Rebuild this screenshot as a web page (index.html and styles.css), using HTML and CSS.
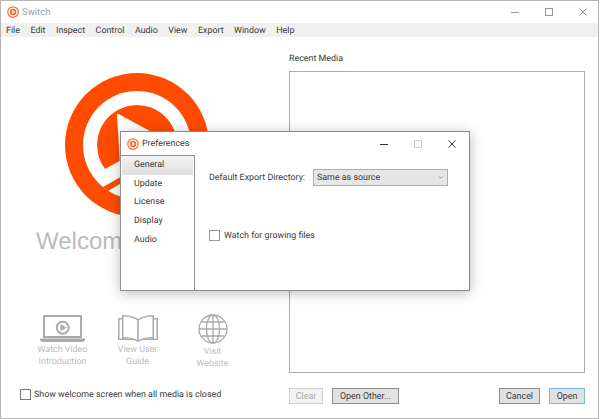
FILE: index.html
```html
<!DOCTYPE html>
<html lang="en">
<head>
<meta charset="utf-8">
<title>Switch</title>
<link rel="stylesheet" href="styles.css">
</head>
<body>
<div class="window">
  <header class="titlebar">
    <svg class="app-icon" viewBox="0 0 24 24"><circle cx="12" cy="12" r="10.500" fill="none" stroke="#ff6a2a" stroke-width="2.500"/><circle cx="12" cy="12" r="6.500" fill="#ff6a2a"/><path d="M10 8v8l6-4Z" fill="#fff"/></svg>
    <span class="title">Switch</span>
    <div class="controls dim">
      <svg class="ctl" viewBox="0 0 8 8"><path d="M0 4.500h8"/></svg>
      <svg class="ctl" viewBox="0 0 8 8"><rect x=".5" y=".5" width="7" height="7"/></svg>
      <svg class="ctl" viewBox="0 0 8 8"><path d="M.5.500l7 7M7.500.500l-7 7"/></svg>
    </div>
  </header>
  <nav class="menubar">
    <span>File</span><span>Edit</span><span>Inspect</span><span>Control</span><span>Audio</span><span>View</span><span>Export</span><span>Window</span><span>Help</span>
  </nav>
  <main class="content">
    <section class="welcome">
      <svg class="logo" viewBox="0 0 144 144">
        <circle cx="72" cy="72" r="72" fill="#ff4c00"/>
        <circle cx="72" cy="72" r="54" fill="#fff"/>
        <path fill="#ff4c00" d="M40 96A40 40 0 1 1 109.500 58Z"/>
        <path fill="#fff" stroke="#fff" stroke-width="2" stroke-linejoin="round" d="M53 42L125 81L56 92Z"/>
        <path fill="#ff4c00" d="M38 114L60 101.500V108L43 118Z"/>
      </svg>
      <h1 class="welcome-title">Welcome</h1>
      <div class="links">
        <a class="link">
          <svg class="link-icon laptop" viewBox="0 0 45 27"><path class="ic-fill" fill-rule="evenodd" d="M3 0H42V23H3ZM5 2V21H40V2Z"/><path class="ic-fill" d="M0 23.500H45V25L43 27H2L0 25Z"/><path class="ic-fill" fill-rule="evenodd" d="M22.700 5.700a7 7 0 1 1 0 14a7 7 0 0 1 0-14ZM22.700 7.700a5 5 0 1 0 0 10a5 5 0 0 0 0-10Z"/><path class="ic-fill" d="M20.500 9.200V16.200L26.500 12.700Z"/></svg>
          <span>Watch Video<br>Introduction</span>
        </a>
        <a class="link">
          <svg class="link-icon book" viewBox="0 0 40 27"><path class="ic-fill" fill-rule="evenodd" d="M4 0C10 0 16 1.500 20 4C24 1.500 30 0 36 0V3H40V25H24L20 27L16 25H0V3H4ZM5.500 1.600V22C11 22 16 23 19.200 25V5.200C16 3 11 1.800 5.500 1.600ZM34.500 1.600C29 1.800 24 3 20.800 5.200V25C24 23 29 22 34.500 22ZM1.500 4.500V23.500H14C11 23.200 7 23.500 4 23.500V4.500ZM38.500 4.500H36V23.500C33 23.500 29 23.200 26 23.500H38.500Z"/></svg>
          <span>View User<br>Guide</span>
        </a>
        <a class="link link-web">
          <svg class="link-icon globe" viewBox="0 0 30 30"><g class="ic-line"><circle cx="15" cy="15" r="14"/><ellipse cx="15" cy="15" rx="6.500" ry="14"/><path d="M15 1V29M1 15H29M3.500 8H26.500M3.500 22H26.500"/></g></svg>
          <span>Visit<br>Website</span>
        </a>
      </div>
      <label class="check show-check"><i class="box"></i>Show welcome screen when all media is closed</label>
    </section>
    <section class="recent">
      <div class="recent-label">Recent Media</div>
      <div class="recent-list"></div>
      <div class="actions">
        <button class="btn btn-clear">Clear</button>
        <button class="btn btn-other">Open Other...</button>
        <span class="spacer"></span>
        <button class="btn btn-cancel">Cancel</button>
        <button class="btn btn-open">Open</button>
      </div>
    </section>
  </main>
  <div class="dialog">
    <header class="dialog-bar">
      <svg class="dialog-icon" viewBox="0 0 24 24"><circle cx="12" cy="12" r="10.500" fill="none" stroke="#ff6a2a" stroke-width="2.500"/><circle cx="12" cy="12" r="6.500" fill="#ff6a2a"/><path d="M10 8v8l6-4Z" fill="#fff"/></svg>
      <span class="dialog-title">Preferences</span>
      <div class="controls">
        <svg class="ctl" viewBox="0 0 8 8"><path d="M0 4.500h8"/></svg>
        <svg class="ctl faint" viewBox="0 0 8 8"><rect x=".5" y=".5" width="7" height="7"/></svg>
        <svg class="ctl" viewBox="0 0 8 8"><path d="M.5.500l7 7M7.500.500l-7 7"/></svg>
      </div>
    </header>
    <div class="dialog-body">
      <ul class="tabs">
        <li class="active">General</li><li>Update</li><li>License</li><li>Display</li><li>Audio</li>
      </ul>
      <div class="pane">
        <div class="row">
          <span>Default Export Directory:</span>
          <div class="select"><span>Same as source</span><svg class="chev" viewBox="0 0 6 4"><path d="M.5.500L3 3 5.500.5"/></svg></div>
        </div>
        <label class="check watch"><i class="box"></i>Watch for growing files</label>
      </div>
    </div>
  </div>
</div>
</body>
</html>
```
FILE: styles.css
```css
* { box-sizing: border-box; }
html, body { margin: 0; height: 100%; }
body { font-family: Roboto, "Open Sans", sans-serif; font-size: 8.900px; color: #3a3a3a; background: #fff; overflow: hidden; text-rendering: geometricPrecision; }
.window { position: relative; width: 599px; height: 419px; border: 1px solid #b5b5b5; display: flex; flex-direction: column; background: #fff; }
.titlebar { height: 22px; flex: none; display: flex; align-items: center; padding: 0 11px 0 6px; }
.app-icon { width: 12px; height: 12px; }
.title { color: #a0a0a0; font-size: 9.500px; margin-left: 3px; }
.controls { margin-left: auto; display: flex; gap: 26px; }
.ctl { width: 8px; height: 8px; fill: none; stroke: #333; stroke-width: 1; }
.dim .ctl { stroke: #999; }
.ctl.faint { stroke: #d0d0d0; }
.menubar { height: 14px; flex: none; background: #f0f0f0; display: flex; gap: 10.500px; align-items: center; padding: 1px 0 0 5px; }
.content { flex: 1; display: flex; min-height: 0; }
.welcome { width: 288px; flex: none; padding-top: 36px; display: flex; flex-direction: column; }
.logo { width: 144px; height: 144px; margin-left: 64px; flex: none; }
.welcome-title { margin: 11px 0 0 35px; font: 400 24px/28px "Liberation Sans", sans-serif; color: #bbb; }
.links { display: flex; margin: 58px 0 0 24px; }
.link { width: 75px; text-align: center; color: #bbb; line-height: 12px; display: flex; flex-direction: column; align-items: center; }
.link-icon { flex: none; margin-bottom: 2px; }
.laptop { width: 45px; height: 27px; margin-top: 1px; }
.book { width: 40px; height: 27px; margin-top: 1px; }
.globe { width: 30px; height: 30px; }
.ic-fill { fill: #aaa; }
.ic-line { fill: none; stroke: #aaa; stroke-width: 1.300; }
.check { display: flex; align-items: center; gap: 3px; }
.box { width: 11px; height: 11px; border: 1px solid #777; background: #fff; flex: none; }
.show-check { margin: 19px 0 0 19px; }
.recent { flex: 1; padding-right: 13px; display: flex; flex-direction: column; }
.recent-label { margin-top: 16px; line-height: 12px; }
.recent-list { height: 302px; flex: none; border: 1px solid #aaa; margin-top: 6px; }
.actions { display: flex; gap: 9px; margin-top: 15px; }
.spacer { flex: 1; }
.btn { font: inherit; height: 16px; border: 1px solid #8e8e8e; background: #e1e1e1; padding: 0; color: #3a3a3a; }
.btn-clear { width: 34px; color: #aaa; border-color: #d0d0d0; background: #f2f2f2; }
.btn-other { width: 67px; }
.btn-cancel { width: 41px; }
.btn-open { width: 36px; border-color: #7ab8e8; }
.dialog { position: absolute; left: 119px; top: 130px; width: 350px; height: 160px; background: #fff; border: 1px solid #8a8a8a; box-shadow: 0 2px 12px rgba(0,0,0,.28); display: flex; flex-direction: column; }
.dialog-bar { height: 23px; flex: none; display: flex; align-items: center; padding: 0 13px 0 6px; gap: 3px; }
.dialog-icon { width: 12px; height: 12px; }
.dialog-title { color: #3a3a3a; }
.dialog-body { flex: 1; display: flex; min-height: 0; }
.tabs { width: 75px; flex: none; list-style: none; margin: 0 0 -1px -1px; padding: 0 1px 1px; border: 1px solid #8f8f8f; }
.tabs li { height: 18.700px; padding-left: 12px; line-height: 19.500px; }
.tabs .active { background: linear-gradient(#f3f3f3, #dedede); }
.pane { flex: 1; padding: 14px 0 0 14px; display: flex; flex-direction: column; }
.row { display: flex; align-items: center; justify-content: space-between; padding-right: 21px; }
.row > span { padding-top: 1px; }
.select { flex: none; width: 135px; height: 17px; border: 1px solid #adadad; background: #e6e6e6; display: flex; align-items: center; justify-content: space-between; padding: 0 4px 0 3px; }
.chev { width: 5px; height: 3px; fill: none; stroke: #777; }
.watch { margin-top: 44px; gap: 4px; }
.watch .box { border-color: #999; }
```
